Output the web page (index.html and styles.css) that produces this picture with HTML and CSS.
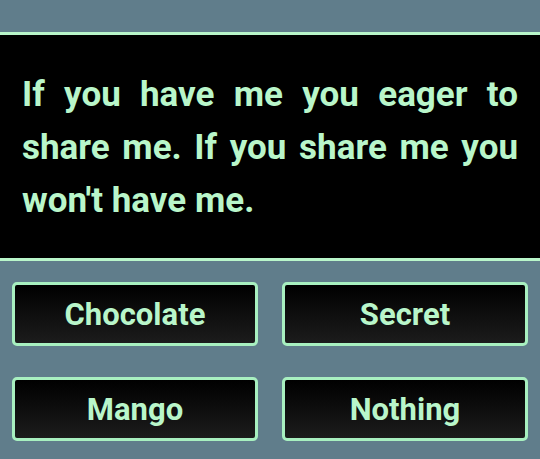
FILE: index.html
```html
<!DOCTYPE html>
<html>
<head>
<meta charset="utf-8">
<link rel="stylesheet" href="styles.css">
</head>
<body>
<div class="screen">
  <div class="question">
    <p class="riddle">If you have me you eager to share me. If you share me you won't have me.</p>
  </div>
  <div class="answers">
    <button class="answer">Chocolate</button>
    <button class="answer">Secret</button>
    <button class="answer">Mango</button>
    <button class="answer">Nothing</button>
  </div>
</div>
</body>
</html>
```
FILE: styles.css
```css
html, body {
  margin: 0;
  padding: 0;
  background: #607d8b;
  font-family: Roboto, "Noto Sans", sans-serif;
}
.screen {
  width: 540px;
  height: 459px;
  padding-top: 32px;
  box-sizing: border-box;
}
.question {
  background: #000;
  border-top: 3px solid #b9f6ca;
  border-bottom: 3px solid #b9f6ca;
  height: 229px;
  box-sizing: border-box;
  padding: 33px 22px 0 22px;
}
.riddle {
  margin: 0;
  color: #b9f6ca;
  font-weight: 700;
  font-size: 35px;
  line-height: 53px;
  text-align: justify;
}
.answers {
  display: grid;
  grid-template-columns: 246px 246px;
  grid-auto-rows: 64px;
  column-gap: 24px;
  row-gap: 31px;
  padding: 21px 12px 0 12px;
}
.answer {
  height: 64px;
  border: 3px solid #a8f0c0;
  border-radius: 5px;
  background: linear-gradient(#000, #1c1c1c);
  color: #b9f6ca;
  font-family: Roboto, "Noto Sans", sans-serif;
  font-weight: 700;
  font-size: 31px;
  padding: 0;
}
```
